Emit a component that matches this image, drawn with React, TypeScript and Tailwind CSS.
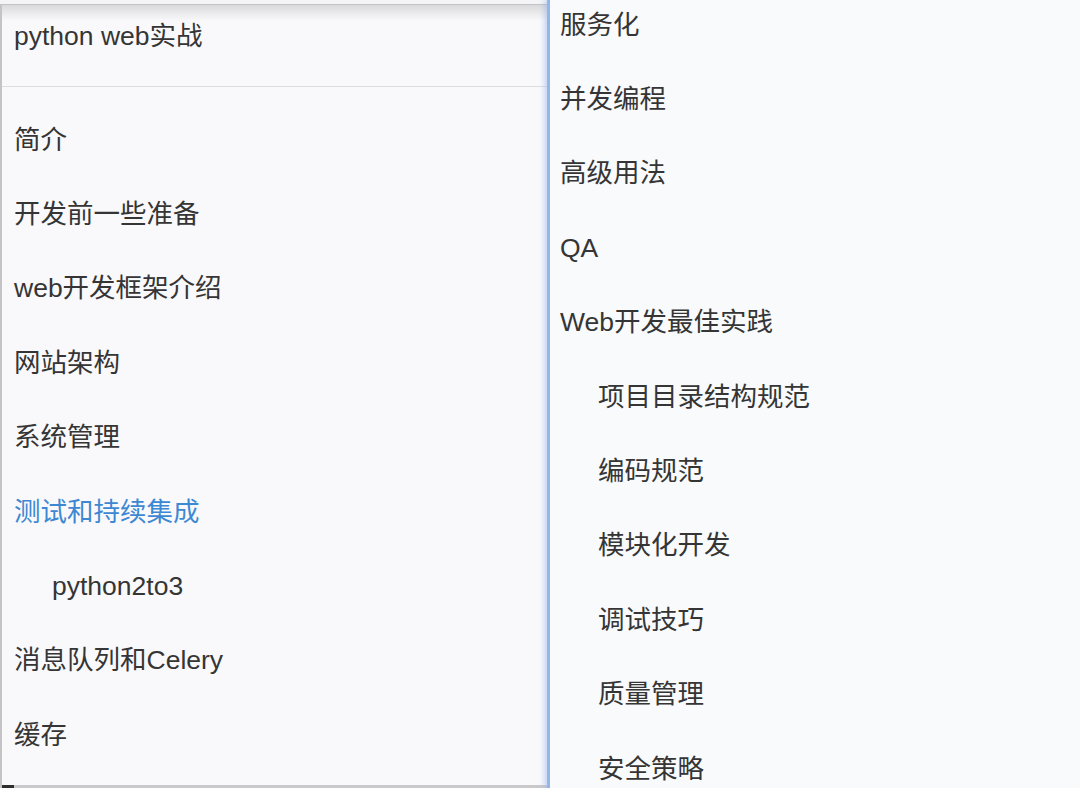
const mainItems = [
  { label: "简介" },
  { label: "开发前一些准备" },
  { label: "web开发框架介绍" },
  { label: "网站架构" },
  { label: "系统管理" },
  { label: "测试和持续集成", active: true },
  { label: "python2to3", child: true },
  { label: "消息队列和Celery" },
  { label: "缓存" },
];

const moreItems = [
  { label: "服务化" },
  { label: "并发编程" },
  { label: "高级用法" },
  { label: "QA" },
  { label: "Web开发最佳实践" },
  { label: "项目目录结构规范", child: true },
  { label: "编码规范", child: true },
  { label: "模块化开发", child: true },
  { label: "调试技巧", child: true },
  { label: "质量管理", child: true },
  { label: "安全策略", child: true },
];

type Item = { label: string; active?: boolean; child?: boolean };

function Row({ item }: { item: Item }) {
  return (
    <div
      className={
        "flex h-[74.4px] shrink-0 items-center whitespace-nowrap " +
        (item.child ? "pl-[52px] " : "pl-[14px] ") +
        (item.active ? "text-[#3d88d2]" : "text-[#353535]")
      }
    >
      {item.label}
    </div>
  );
}

export default function App() {
  return (
    <div
      className="flex h-[788px] w-[1080px] overflow-hidden bg-[#f9fafc] text-[26.5px] leading-[31px]"
      style={{ fontFamily: '"Liberation Sans", "Noto Sans CJK SC", sans-serif' }}
    >
      {/* Left: table of contents */}
      <div className="flex h-full w-[547px] shrink-0 flex-col bg-[#f9f9fb]">
        <div className="h-[4px] shrink-0 bg-[#f4f4f6]" />
        <div className="flex flex-1 flex-col overflow-hidden border-t border-l-2 border-[#c4c4c6]">
          <div className="h-[81px] shrink-0 bg-[linear-gradient(to_bottom,#d9d9db_0px,#eeeeef_10px,#f7f7f9_15px,#f9f9fb_16px)] px-[12px] pt-[16px] text-[#353535]">
            python web实战
          </div>
          <div className="h-px shrink-0 bg-[#dcdde1]" />
          <div className="flex flex-1 flex-col pt-[16px]">
            {mainItems.map((it) => (
              <div key={it.label} className="-ml-[2px]">
                <Row item={it} />
              </div>
            ))}
          </div>
          <div className="flex h-[3px] shrink-0 bg-[#c9c9cb]">
            <div className="w-[12px] bg-[#2e2e2e]" />
          </div>
        </div>
      </div>

      {/* Right: continued list */}
      <div className="flex h-full flex-1 border-l-[3px] border-[#94b5e8] shadow-[-3px_0_5px_rgba(140,175,235,0.45)]">
        <div className="-mt-[12px] -ml-[4px] flex flex-col">
          {moreItems.map((it) => (
            <Row key={it.label} item={it} />
          ))}
        </div>
      </div>
    </div>
  );
}
